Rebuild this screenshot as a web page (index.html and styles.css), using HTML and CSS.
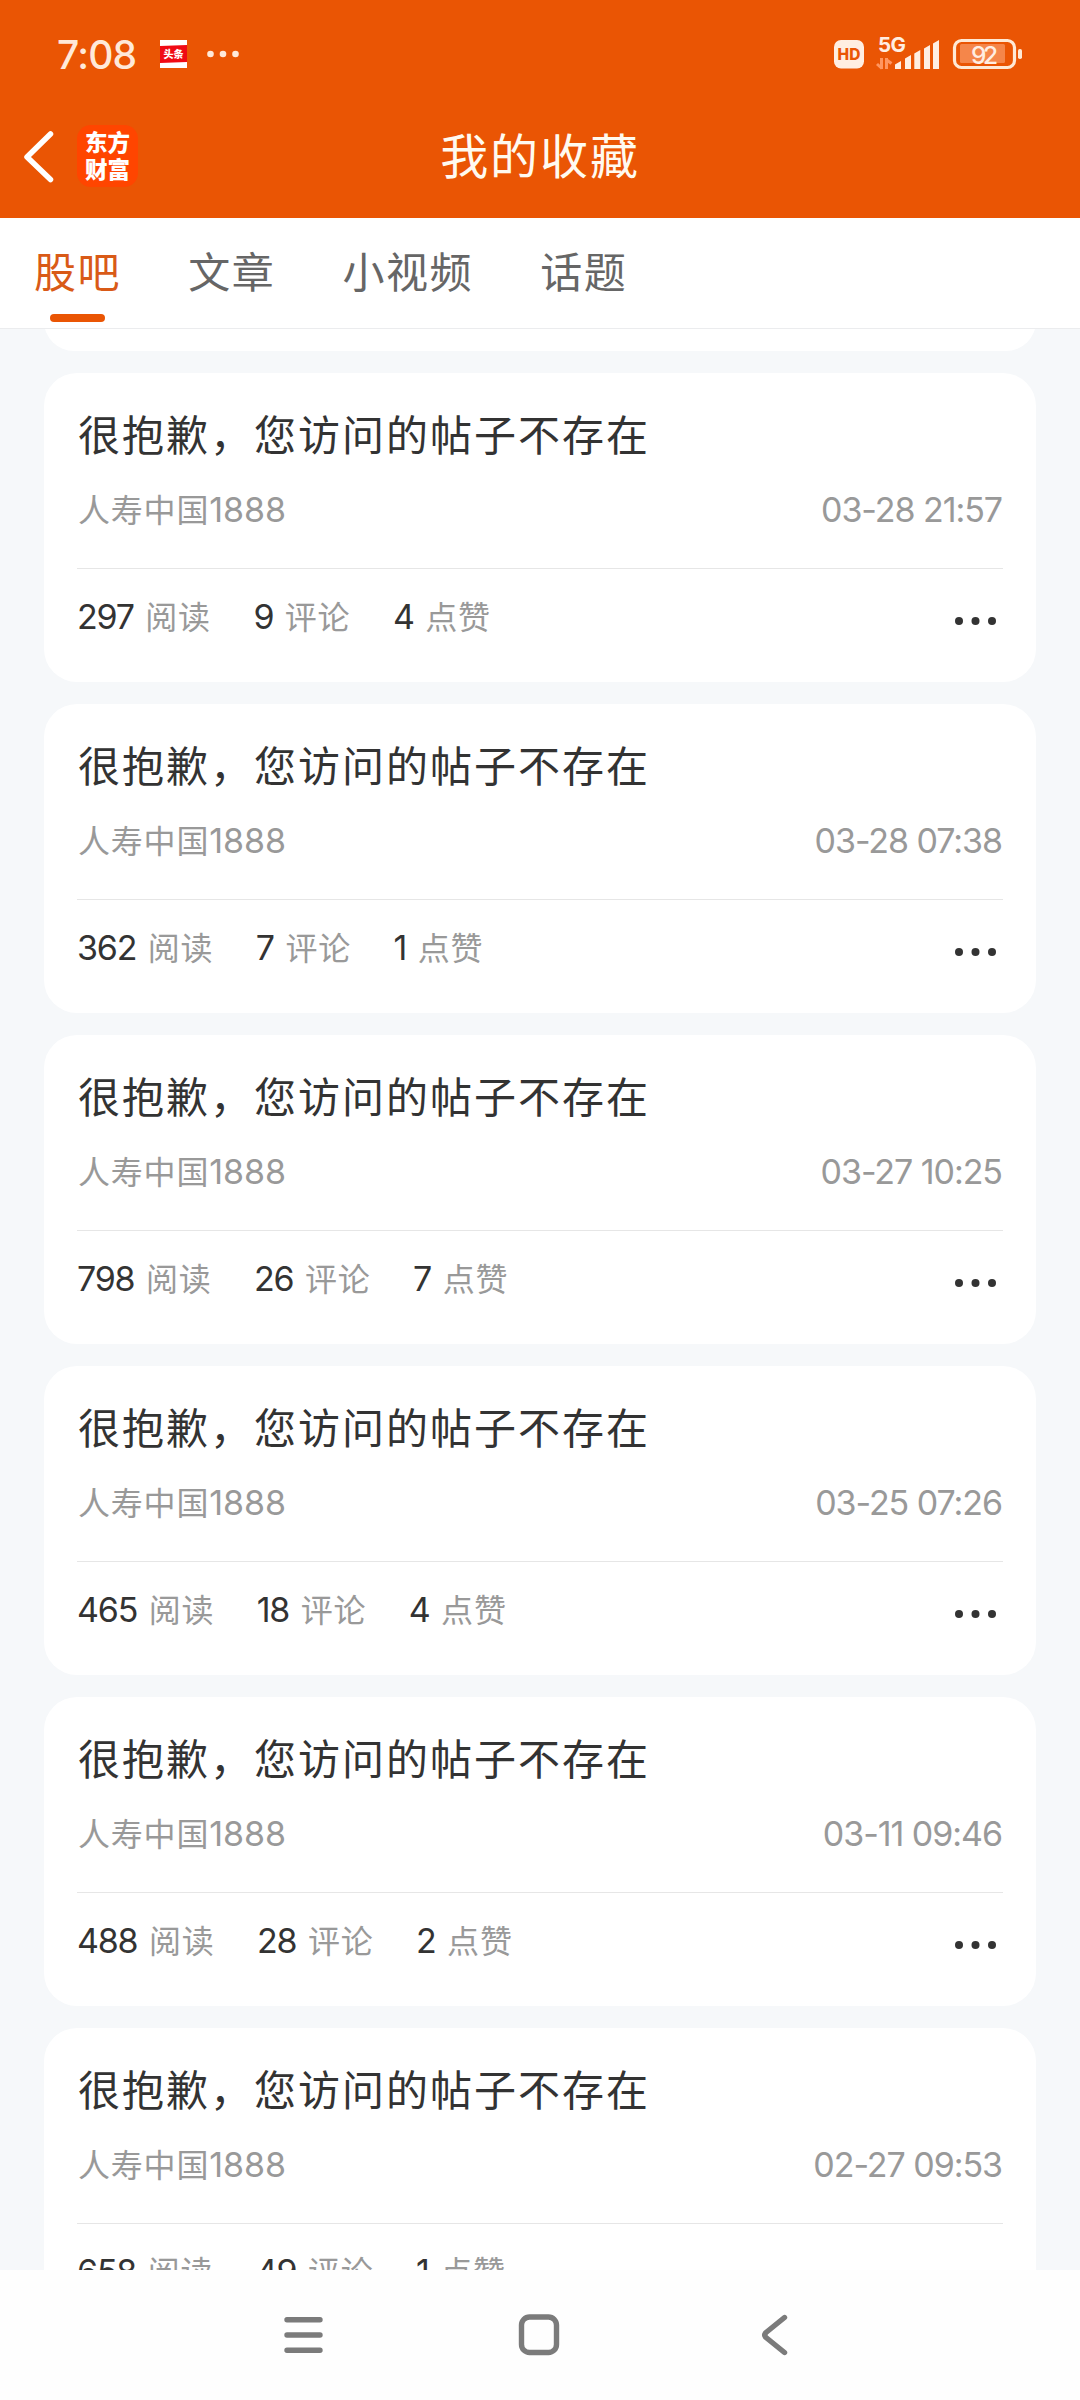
FILE: index.html
```html
<!DOCTYPE html>
<html lang="zh-CN">
<head>
<meta charset="utf-8">
<title>我的收藏</title>
<link rel="stylesheet" href="styles.css">
</head>
<body>
<div class="screen">
  <header class="header">
    <div class="status">
      <span class="clock">7:08</span>
      <svg class="news" width="27" height="28" viewBox="0 0 27 28"><rect width="27" height="28" fill="#fff"/><path d="M0 6L27 5V22L0 23Z" fill="#f00a14"/><text x="13.5" y="17.5" text-anchor="middle" class="news-text">头条</text></svg>
      <svg class="more" width="32" height="8" viewBox="0 0 32 8" fill="#ffe9d9"><circle cx="3.5" cy="4" r="3.3"/><circle cx="16" cy="4" r="3.3"/><circle cx="28.5" cy="4" r="3.3"/></svg>
      <svg class="system" width="200" height="40" viewBox="830 34 200 40">
        <rect x="834" y="40" width="30" height="28.5" rx="7" fill="#ffeee2"/>
        <text x="849" y="59.5" text-anchor="middle" class="hd" textLength="23">HD</text>
        <text x="878" y="52" class="net" textLength="28">5G</text>
        <path d="M881.500 58V69M882 68.500L877 64M886.500 69V58M886 59.500L891.500 63.500" fill="none" stroke="#ff9660" stroke-width="3"/>
        <path d="M895 69V64.500L901 61V69ZM905 69V58.500L911 55V69ZM914.300 69V53.500L920.300 50V69ZM924 69V48.500L930 45V69ZM933 69V43.500L939 40V69Z" fill="#ffeee2"/>
        <rect x="954.500" y="40.500" width="60" height="27" rx="7" fill="none" stroke="#ffe9d5" stroke-width="3.200"/>
        <rect x="960" y="44" width="45" height="19" rx="1.500" fill="#f5864a"/>
        <rect x="1018" y="49" width="4" height="10" rx="1.800" fill="#ffe9d5"/>
        <text x="971" y="63.500" class="battery" textLength="27">92</text>
      </svg>
    </div>
    <div class="titlebar">
      <svg class="back" width="32" height="56" viewBox="0 0 32 56"><path d="M28.500 6L5 29L28.500 51.500" fill="none" stroke="#fff" stroke-width="5.500" stroke-linecap="round" stroke-linejoin="round"/></svg>
      <div class="logo"><span>东方</span><span>财富</span></div>
      <h1 class="title">我的收藏</h1>
    </div>
  </header>
  <nav class="tabs">
    <span class="tab active">股吧</span><span class="tab">文章</span><span class="tab">小视频</span><span class="tab">话题</span>
  </nav>
  <main class="list" id="list">
    <div class="card-end"></div>
  </main>
  <footer class="navbar">
    <svg width="1080" height="130" viewBox="0 2270 1080 130" fill="none" stroke="#7b7b7b" stroke-width="5.400" stroke-linecap="round" stroke-linejoin="round">
      <path d="M287 2319.700H320M287 2335H320M287 2350.300H320"/>
      <rect x="521.500" y="2317" width="35" height="35.500" rx="8"/>
      <path d="M784.500 2317.500L766 2332.500Q763.500 2335 766 2337.500L784.500 2352.500"/>
    </svg>
  </footer>
</div>
<script src="list.js"></script>
</body>
</html>
```
FILE: styles.css
```css
* { box-sizing: border-box; }
body { margin: 0; font-family: Inter, "Noto Sans CJK SC", sans-serif; }
.screen { width: 1080px; height: 2400px; overflow: hidden; display: flex; flex-direction: column; background: #f6f8fa; }
.header { height: 218px; flex: none; background: #ea5504; display: flex; flex-direction: column; }
.status { height: 108px; display: flex; align-items: center; padding-left: 57px; }
.clock { width: 103px; font-size: 39px; font-weight: 500; color: #ffe9d9; letter-spacing: -0.8px; }
.news-text { font: 900 10px "Noto Sans CJK SC", sans-serif; fill: #fff; }
.more { margin-left: 20px; }
.system { margin-left: auto; margin-right: 50px; }
.hd { font: 800 15.500px Inter, sans-serif; fill: #ea5504; }
.net { font: 700 20.500px Inter, sans-serif; fill: #ffeee2; }
.battery { font: 500 24.500px Inter, sans-serif; fill: #ffeee2; }
.titlebar { height: 110px; display: grid; grid-template-columns: 77px 61px 1fr 138px; padding-bottom: 15px; align-items: center; }
.back { margin-left: 22px; }
.logo { height: 62px; padding-bottom: 2px; border-radius: 14px; background: #ff4500; color: #fff; font: 900 22.500px/26.500px "Noto Sans CJK SC", sans-serif; display: flex; flex-direction: column; align-items: center; justify-content: center; }
.title { margin: 0; padding-bottom: 5px; text-align: center; font: 400 48px/60px "Noto Sans CJK SC", sans-serif; letter-spacing: 1.900px; color: #fffaf0; }
.tabs { height: 111px; flex: none; background: #fff; border-bottom: 1px solid #ebecee; display: flex; gap: 67px; padding-left: 34px; }
.tab { height: 110px; display: flex; flex-direction: column; align-items: center; padding-top: 19px; font: 400 42px/66px "Noto Sans CJK SC", sans-serif; letter-spacing: 1.600px; color: #666; }
.active { color: #d95a17; }
.active::after { content: ""; width: 55px; height: 8px; margin-top: 11px; border-radius: 4px; background: #ea5504; }
.list { flex: 1; min-height: 0; overflow: hidden; padding: 0 44px; }
.card-end { height: 60px; margin: -38px 0 22px; background: #fff; border-radius: 33px; }
.card { height: 309px; margin-bottom: 22px; padding: 27px 33px 0; background: #fff; border-radius: 33px; }
.card-title { margin: 0; padding-left: 1px; font: 400 42px/66px "Noto Sans CJK SC", sans-serif; letter-spacing: 2px; color: #333; }
.meta { height: 103px; display: flex; justify-content: space-between; padding: 18px 1px 0; color: #999; border-bottom: 1px solid #e6e6e6; }
.cjk { font: 400 32px/48px "Noto Sans CJK SC", sans-serif; letter-spacing: 0.800px; }
.num { font: 400 34px/48px Inter, sans-serif; }
.meta .num { padding-top: 2px; }
.meta time { letter-spacing: -1.050px; }
.author, .stat { display: flex; }
.stats { display: flex; align-items: flex-start; padding: 22px 5px 0 0; gap: 42.500px; color: #999; }
.stat { gap: 11.500px; }
.stat .num { padding-top: 2px; letter-spacing: -1.200px; color: #333; }
.dots { margin: 25px 0 0 auto; }
.navbar { height: 130px; flex: none; background: #fefefe; }
.navbar svg { display: block; }
```
FILE: list.js
```js
const posts = [
  ["03-28 21:57", 297, 9, 4],
  ["03-28 07:38", 362, 7, 1],
  ["03-27 10:25", 798, 26, 7],
  ["03-25 07:26", 465, 18, 4],
  ["03-11 09:46", 488, 28, 2],
  ["02-27 09:53", 658, 49, 1]
];
const stat = (n, label) => `<span class="stat"><span class="num">${n}</span><span class="cjk">${label}</span></span>`;
document.getElementById("list").insertAdjacentHTML("beforeend", posts.map(([time, reads, comments, likes]) => `
<article class="card">
  <h2 class="card-title">很抱歉，您访问的帖子不存在</h2>
  <div class="meta"><span class="author"><span class="cjk">人寿中国</span><span class="num">1888</span></span><time class="num">${time}</time></div>
  <div class="stats">${stat(reads, "阅读")}${stat(comments, "评论")}${stat(likes, "点赞")}
    <svg class="dots" width="44" height="10" viewBox="0 0 44 10" fill="#333"><circle cx="5" cy="5" r="4"/><circle cx="21.500" cy="5" r="4"/><circle cx="38" cy="5" r="4"/></svg>
  </div>
</article>`).join(""));
```
